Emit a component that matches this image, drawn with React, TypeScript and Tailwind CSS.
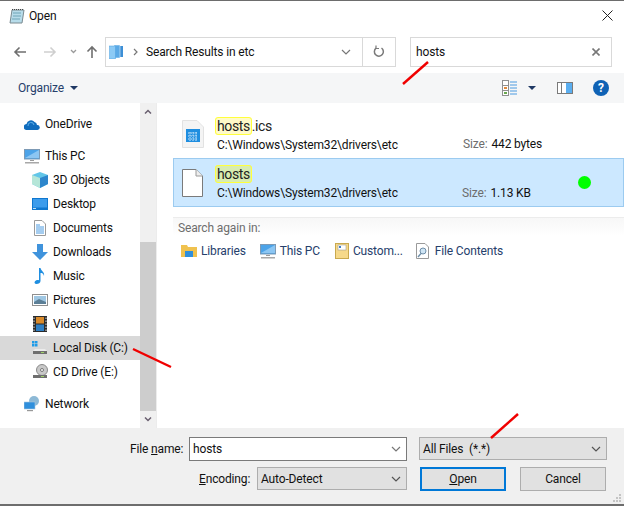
import React from "react";

const NavItem = ({ icon, label, active, indent }: { icon: React.ReactNode; label: string; active?: boolean; indent?: boolean }) => (
  <div className={`flex h-6 items-center ${indent ? "pl-[32px]" : "pl-[24px]"} ${active ? "bg-[#d9d9d9]" : ""}`}>
    <span className="flex h-4 w-4 shrink-0 items-center justify-center">{icon}</span>
    <span className="ml-[5px] text-[#101010]">{label}</span>
  </div>
);

const Monitor = () => (
  <svg width="16" height="16" viewBox="0 0 16 16">
    <rect x="0.5" y="1.5" width="15" height="9.5" fill="#4ca3e8" stroke="#7d9ab5" strokeWidth="1" />
    <path d="M1 10 L15 2 V10 Z" fill="#8cc6f3" />
    <rect x="6" y="12" width="4" height="1" fill="#9a9a9a" />
    <rect x="1" y="14" width="14" height="1.5" fill="#a8a8a8" />
  </svg>
);

const Disk = ({ cd }: { cd?: boolean }) => (
  <svg width="16" height="16" viewBox="0 0 16 16">
    {cd ? (
      <>
        <circle cx="10" cy="6" r="5.5" fill="#c8c8c8" stroke="#8a8a8a" />
        <circle cx="10" cy="6" r="1.5" fill="#fff" stroke="#777" />
      </>
    ) : (
      <>
        <rect x="0" y="1" width="2.5" height="2.5" fill="#1e9be8" />
        <rect x="3" y="1" width="2.5" height="2.5" fill="#1e9be8" />
        <rect x="0" y="4" width="2.5" height="2.5" fill="#1e9be8" />
        <rect x="3" y="4" width="2.5" height="2.5" fill="#1e9be8" />
        <path d="M3 9 H13 L15 11 H1 Z" fill="#ececec" />
      </>
    )}
    <rect x="1" y="11" width="14" height="3" fill="#6f6f6f" />
    <rect x="9" y="12" width="3" height="1" fill="#9fd36a" />
  </svg>
);

const Chevron = ({ color = "#666" }: { color?: string }) => (
  <svg width="10" height="6" viewBox="0 0 10 6" fill="none" stroke={color} strokeWidth="1.2">
    <path d="M1 1 L5 5 L9 1" />
  </svg>
);

const Mark = ({ children, tint }: { children: React.ReactNode; tint: string }) => (
  <span className={`-ml-[2px] rounded-[3px] border border-[#ffff3c] px-px ${tint}`}>{children}</span>
);

const ChevronSolid = () => <span className="block h-0 w-0 border-x-[4px] border-t-[4px] border-x-transparent border-t-[#1f3864]" />;

export default function App() {
  return (
    <div className="relative flex h-[506px] w-[624px] flex-col overflow-hidden bg-white font-['Roboto','Noto_Sans',sans-serif] text-[12px] tracking-[-0.15px] text-black">
      <div className="h-px shrink-0 bg-[#6d6d6d]" />

      {/* title bar */}
      <div className="flex h-[29px] shrink-0 items-center pl-[9px] pr-[11px]">
        <svg width="16" height="16" viewBox="0 0 16 16">
          <path d="M3 2 H15 L13 15 H1 Z" fill="#b7dcea" stroke="#7a8a90" />
          <path d="M3 1.5 H15" stroke="#444" strokeDasharray="1 1" />
          <path d="M4 5 H12 M4 8 H12 M3 11 H11" stroke="#6fa4b6" />
        </svg>
        <span className="ml-[4px] text-[#111]">Open</span>
        <svg className="ml-auto" width="11" height="11" viewBox="0 0 11 11" stroke="#222" strokeWidth="1">
          <path d="M0.5 0.5 L10.5 10.5 M10.5 0.5 L0.5 10.5" />
        </svg>
      </div>

      {/* address row */}
      <div className="flex h-[43px] shrink-0 items-center pl-[13px] pr-[12px]">
        <svg width="14" height="12" viewBox="0 0 14 12" fill="none" stroke="#6f6f6f" strokeWidth="1.6">
          <path d="M13 6 H2 M6.5 1.5 L2 6 L6.5 10.5" />
        </svg>
        <svg className="ml-[16px]" width="14" height="12" viewBox="0 0 14 12" fill="none" stroke="#cfcfcf" strokeWidth="1.6">
          <path d="M1 6 H12 M7.5 1.5 L12 6 L7.5 10.5" />
        </svg>
        <span className="ml-[13px]"><svg width="7" height="5" viewBox="0 0 7 5" fill="none" stroke="#9a9a9a" strokeWidth="1.3"><path d="M1 1 L3.5 3.5 L6 1" /></svg></span>
        <svg className="ml-[9px]" width="12" height="14" viewBox="0 0 12 14" fill="none" stroke="#6f6f6f" strokeWidth="1.6">
          <path d="M6 13 V2 M1.5 6.5 L6 2 L10.5 6.5" />
        </svg>
        <div className="ml-[7px] flex h-[30px] w-[291px] items-center border border-[#d9d9d9]">
          <svg className="ml-[3px]" width="15" height="15" viewBox="0 0 15 15">
            <rect x="9" y="2" width="5" height="11" fill="#3d8fd6" />
            <rect x="5" y="1" width="6" height="13" fill="#5aa9e6" stroke="#fff" strokeWidth="0.5" />
            <rect x="0.5" y="2" width="6" height="13" fill="#8ccaf5" stroke="#4a9fe0" strokeWidth="0.5" />
          </svg>
          <svg className="ml-[9px]" width="5" height="8" viewBox="0 0 5 8" fill="none" stroke="#777" strokeWidth="1.2"><path d="M1 1 L4 4 L1 7" /></svg>
          <span className="ml-[8px] text-[#111]">Search Results in etc</span>
          <span className="ml-auto mr-[11px] flex"><Chevron color="#777" /></span>
          <div className="flex h-full w-[33px] items-center justify-center border-l border-[#d9d9d9]">
            <svg width="12" height="13" viewBox="0 0 12 13" fill="none" stroke="#7a7a7a" strokeWidth="1.5">
              <path d="M8.5 3 A4.5 4.5 0 1 1 3 3.2" />
              <path d="M3 0.5 V3.5 H6" strokeWidth="1.2" />
            </svg>
          </div>
        </div>
        <div className="ml-[14px] flex h-[30px] w-[202px] items-center border border-[#d9d9d9] pl-[5px] pr-[11px]">
          <span className="text-[#111]">hosts</span>
          <svg className="ml-auto" width="8" height="8" viewBox="0 0 8 8" stroke="#777" strokeWidth="1.6"><path d="M0.5 0.5 L7.5 7.5 M7.5 0.5 L0.5 7.5" /></svg>
        </div>
      </div>

      {/* toolbar */}
      <div className="flex h-[30px] shrink-0 items-center bg-[#f5f6f7] pl-[18px] pr-[15px]">
        <span className="text-[#26406b]">Organize</span>
        <span className="ml-[6px]"><ChevronSolid /></span>
        <svg className="ml-auto" width="16" height="16" viewBox="0 0 16 16">
          <rect x="0.5" y="0.5" width="6" height="15" fill="#fff" stroke="#8f8f8f" />
          <path d="M1 5.5 H6 M1 10.5 H6" stroke="#8f8f8f" />
          <rect x="2" y="7" width="3" height="2" fill="#e08a3c" />
          <rect x="2" y="12" width="3" height="2" fill="#6aa84f" />
          <path d="M8 2 H15 M8 5 H15 M8 8 H15 M8 11 H15 M8 14 H15" stroke="#4a9ae0" />
        </svg>
        <span className="ml-[10px] mr-[21px]"><ChevronSolid /></span>
        <svg width="16" height="12" viewBox="0 0 16 12">
          <rect x="0.5" y="0.5" width="15" height="11" fill="#fff" stroke="#7a7a7a" />
          <rect x="4" y="1" width="1" height="10" fill="#7a7a7a" />
          <rect x="9" y="1" width="6" height="10" fill="#5aaef0" />
        </svg>
        <span className="ml-[20px] flex h-4 w-4 items-center justify-center rounded-full bg-[#0f62b5] text-[12px] font-bold leading-none text-white">?</span>
      </div>

      {/* body */}
      <div className="flex min-h-0 flex-1">
        <div className="flex w-[140px] shrink-0 flex-col pt-[9px]">
          <NavItem
            label="OneDrive"
            icon={
              <svg width="16" height="11" viewBox="0 0 16 11">
                <path d="M3 11 A3 3 0 0 1 2.5 5 A4.5 4.5 0 0 1 10.5 3 A3.5 3.5 0 0 1 13 6 A2.5 2.5 0 0 1 13.5 11 Z" fill="#0f6cbd" />
                <path d="M4 7 A3 3 0 0 1 10 6" stroke="#5fb0ea" fill="none" />
              </svg>
            }
          />
          <div className="h-[8px]" />
          <NavItem label="This PC" icon={<Monitor />} />
          <NavItem
            indent
            label="3D Objects"
            icon={
              <svg width="16" height="16" viewBox="0 0 16 16">
                <path d="M8 0 L16 3 V12 L8 16 L0 12 V3 Z" fill="#62c6e8" />
                <path d="M0 3 L8 6 V16 L0 12 Z" fill="#b5e6d8" />
                <path d="M8 6 L16 3 V12 L8 16 Z" fill="#2d86cc" />
              </svg>
            }
          />
          <NavItem
            indent
            label="Desktop"
            icon={
              <svg width="16" height="12" viewBox="0 0 16 12">
                <rect width="16" height="12" fill="#0f77cf" />
                <rect x="1" y="1" width="14" height="8.5" fill="#3c9cec" />
                <rect x="1" y="10" width="3" height="1" fill="#bfe0f7" />
              </svg>
            }
          />
          <NavItem
            indent
            label="Documents"
            icon={
              <svg width="12" height="16" viewBox="0 0 12 16">
                <path d="M0.5 0.5 H8 L11.5 4 V15.5 H0.5 Z" fill="#fff" stroke="#9a9a9a" />
                <path d="M2 5 H6 M2 7 H10 M2 9 H10 M2 11 H10 M2 13 H10" stroke="#4a9ae0" />
              </svg>
            }
          />
          <NavItem
            indent
            label="Downloads"
            icon={
              <svg width="16" height="16" viewBox="0 0 16 16">
                <path d="M5 0 H11 V8 H16 L8 16 L0 8 H5 Z" fill="#3f93dc" />
              </svg>
            }
          />
          <NavItem
            indent
            label="Music"
            icon={
              <svg width="12" height="16" viewBox="0 0 12 16">
                <path d="M5 0 H6.5 C7 3 11 4 10 8 C9.5 5.5 8 5 6.5 5 V13 C6.5 15 4.5 16 2.5 16 C0.5 16 0 14.5 1 13.3 C2 12 4 11.8 5 12.3 Z" fill="#1f8ee0" />
              </svg>
            }
          />
          <NavItem
            indent
            label="Pictures"
            icon={
              <svg width="16" height="12" viewBox="0 0 16 12">
                <rect x="0.5" y="0.5" width="15" height="11" fill="#fff" stroke="#8f8f8f" />
                <rect x="2" y="2" width="12" height="8" fill="#9fc7e3" />
                <path d="M2 8 L7 5 L14 8 V10 H2 Z" fill="#5c7f96" />
              </svg>
            }
          />
          <NavItem
            indent
            label="Videos"
            icon={
              <svg width="14" height="16" viewBox="0 0 14 16">
                <rect width="14" height="16" fill="#2b2b2b" />
                <rect x="3" y="1" width="8" height="6.5" fill="#d98a2b" />
                <rect x="3" y="8.5" width="8" height="6.5" fill="#2e7fc4" />
                <path d="M1 1.5 V15 M13 1.5 V15" stroke="#ddd" strokeDasharray="1.5 1.5" />
              </svg>
            }
          />
          <NavItem indent active label="Local Disk (C:)" icon={<Disk />} />
          <NavItem indent label="CD Drive (E:)" icon={<Disk cd />} />
          <div className="h-[8px]" />
          <NavItem
            label="Network"
            icon={
              <svg width="16" height="16" viewBox="0 0 16 16">
                <circle cx="10" cy="5" r="5" fill="#8db9d6" />
                <rect x="0" y="6" width="11" height="7" fill="#2f8fdc" stroke="#a9c7de" strokeWidth="0.6" />
                <rect x="3" y="14" width="6" height="1.2" fill="#999" />
              </svg>
            }
          />
        </div>

        {/* scrollbar */}
        <div className="flex w-[16px] shrink-0 flex-col items-center bg-[#f0f0f0]">
          <div className="flex h-[17px] w-full items-center justify-center">
            <svg width="8" height="5" viewBox="0 0 8 5" fill="none" stroke="#6a6070" strokeWidth="1.5"><path d="M1 4.5 L4 1.5 L7 4.5" /></svg>
          </div>
          <div className="mt-[122px] h-[169px] w-full bg-[#cdcdcd]" />
          <div className="flex h-[17px] w-full items-center justify-center">
            <svg width="8" height="5" viewBox="0 0 8 5" fill="none" stroke="#6a6070" strokeWidth="1.5"><path d="M1 0.5 L4 3.5 L7 0.5" /></svg>
          </div>
        </div>
        <div className="w-px shrink-0 bg-[#ececec]" />

        {/* results */}
        <div className="flex min-w-0 flex-1 flex-col pl-[16px] pt-[7px]">
          <div className="flex h-[48px] items-center">
            <svg className="ml-[9px] shrink-0" width="22" height="28" viewBox="0 0 22 28">
              <path d="M0.5 0.5 H15 L21.5 7 V27.5 H0.5 Z" fill="#f4f4f4" stroke="#e2e2e2" />
              <rect x="4" y="9" width="14" height="13" fill="#1f8ee0" />
              <path d="M6 13 H16 M6 16 H16 M6 19 H16 M8 12 V21 M11 12 V21 M14 12 V21" stroke="#cfe7fa" strokeDasharray="1.5 1" />
            </svg>
            <div className="ml-[13px] flex w-[225px] shrink-0 flex-col">
              <span className="h-[21px] text-[14px] leading-[20px] tracking-[-0.4px] text-[#222]"><Mark tint="bg-[#fffac8]">hosts</Mark>.ics</span>
              <span className="whitespace-nowrap leading-[16px] text-[#111]">C:\Windows\System32\drivers\etc</span>
            </div>
            <span className="ml-[21px] self-end pb-[5px] text-[#6d6d6d]">Size:</span>
            <span className="ml-[4px] self-end pb-[5px] text-[#111]">442 bytes</span>
          </div>
          <div className="flex h-[49px] items-center border border-[#9ccbf0] bg-[#cce8ff]">
            <svg className="ml-[8px] shrink-0" width="21" height="28" viewBox="0 0 21 28">
              <path d="M0.5 0.5 H14 L20.5 7 V27.5 H0.5 Z" fill="#fff" stroke="#7a7a7a" />
              <path d="M14 0.5 V7 H20.5" fill="#eee" stroke="#9a9a9a" />
            </svg>
            <div className="ml-[14px] flex w-[225px] shrink-0 flex-col">
              <span className="h-[21px] text-[14px] leading-[20px] tracking-[-0.4px] text-[#222]"><Mark tint="bg-[#d8ecb0]">hosts</Mark></span>
              <span className="whitespace-nowrap leading-[16px] text-[#111]">C:\Windows\System32\drivers\etc</span>
            </div>
            <span className="ml-[20px] self-end pb-[4px] text-[#6d6d6d]">Size:</span>
            <span className="ml-[4px] self-end pb-[4px] text-[#111]">1.13 KB</span>
            <span className="ml-[47px] h-[13px] w-[13px] rounded-full bg-[#00ff00]" />
          </div>
          <div className="mt-[10px] border-t border-[#ececec] bg-gradient-to-b from-[#f7f7f7] to-white pl-[5px] pt-[2px] leading-[16px] text-[#6d6d6d]">Search again in:</div>
          <div className="mt-[5px] flex h-[20px] items-center pl-[8px] text-[#26406b]">
            <svg width="16" height="16" viewBox="0 0 16 16">
              <path d="M0 2 H6 L7 4 H16 V14 H0 Z" fill="#f0c24f" />
              <rect x="4" y="8" width="8" height="6" fill="#2f8fdc" />
            </svg>
            <span className="ml-[4px]">Libraries</span>
            <span className="ml-[14px] flex"><Monitor /></span>
            <span className="ml-[4px]">This PC</span>
            <svg className="ml-[15px]" width="14" height="16" viewBox="0 0 14 16">
              <rect x="0.5" y="0.5" width="13" height="15" fill="#f6d98a" stroke="#c9a94e" />
              <rect x="3" y="2" width="8" height="5" fill="#fff" stroke="#8f8f8f" strokeWidth="0.5" />
              <rect x="4" y="3" width="2" height="2" fill="#3f7fc4" />
            </svg>
            <span className="ml-[4px]">Custom...</span>
            <svg className="ml-[13px]" width="13" height="16" viewBox="0 0 13 16">
              <path d="M0.5 0.5 H9 L12.5 4 V15.5 H0.5 Z" fill="#fff" stroke="#9a9a9a" />
              <circle cx="7" cy="8" r="3" fill="#cfe5f5" stroke="#6f8ea8" />
              <path d="M5 10.5 L2 14" stroke="#6f8ea8" strokeWidth="1.4" />
            </svg>
            <span className="ml-[6px]">File Contents</span>
          </div>
        </div>
      </div>

      {/* bottom panel */}
      <div className="relative flex h-[76px] shrink-0 flex-col bg-[#f0f0f0] pt-[9px]">
        <div className="flex h-[24px] items-center">
          <span className="ml-[130px] w-[59px] whitespace-nowrap text-[#111]">File <u>n</u>ame:</span>
          <div className="flex h-[24px] w-[218px] items-center justify-between border border-[#7a7a7a] bg-white pl-[3px] pr-[5px]">
            <span className="text-[#111]">hosts</span>
            <Chevron color="#777" />
          </div>
          <div className="ml-[12px] flex h-[23px] w-[188px] items-center justify-between self-start border border-[#adadad] bg-[#e1e1e1] pl-[3px] pr-[5px]">
            <span className="text-[#111]">All Files&nbsp; (*.*)</span>
            <Chevron color="#555" />
          </div>
        </div>
        <div className="mt-[6px] flex h-[24px] items-center">
          <span className="ml-[199px] w-[58px] text-[#111]"><u>E</u>ncoding:</span>
          <div className="flex h-[23px] w-[150px] items-center justify-between self-start border border-[#adadad] bg-[#e1e1e1] pl-[3px] pr-[5px]">
            <span className="text-[#111]">Auto-Detect</span>
            <Chevron color="#555" />
          </div>
          <div className="ml-[13px] flex h-[24px] w-[86px] items-center justify-center border-2 border-[#0078d7] bg-[#e1e1e1] text-[#111]"><span><u>O</u>pen</span></div>
          <div className="ml-[14px] flex h-[24px] w-[86px] items-center justify-center border border-[#adadad] bg-[#e1e1e1] text-[#111]">Cancel</div>
        </div>
        <svg className="absolute bottom-[1px] right-[2px]" width="10" height="10" viewBox="0 0 10 10" fill="#c4c4c4">
          <rect x="7" y="1" width="2" height="2" />
          <rect x="4" y="4" width="2" height="2" />
          <rect x="7" y="4" width="2" height="2" />
          <rect x="1" y="7" width="2" height="2" />
          <rect x="4" y="7" width="2" height="2" />
          <rect x="7" y="7" width="2" height="2" />
        </svg>
      </div>
      <div className="h-[2px] shrink-0 bg-[#6d6d6d]" />

      {/* red annotation strokes */}
      <svg className="pointer-events-none absolute left-0 top-0" width="624" height="506" fill="none" stroke="#f00000" strokeWidth="2.4">
        <path d="M403 84 L428 62" />
        <path d="M133 349 L171 367" />
        <path d="M491 438 L518 414" />
      </svg>
    </div>
  );
}
